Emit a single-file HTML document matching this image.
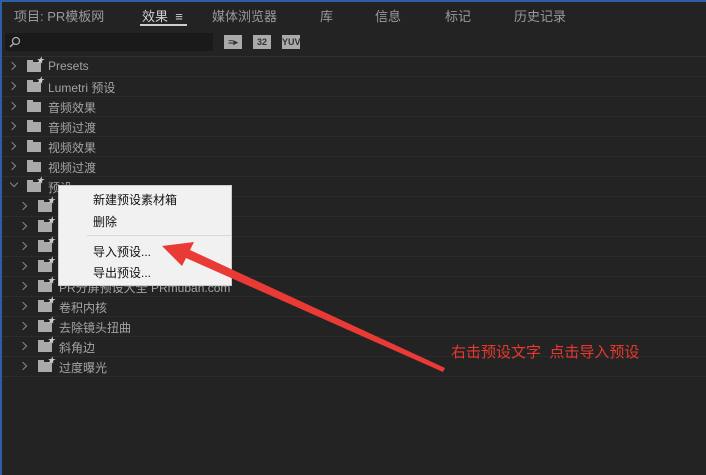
<!DOCTYPE html><html><head><meta charset="utf-8"><style>
*{margin:0;padding:0;box-sizing:border-box}
body{width:706px;height:475px;background:#232323;position:relative;overflow:hidden;font-family:"Liberation Sans","Noto Sans CJK SC",sans-serif;color:#a9a9a9;font-size:12px}
.top{position:absolute;left:0;top:0;width:706px;height:2px;background:#2d5ea8}
.left{position:absolute;left:0;top:0;width:2px;height:475px;background:#2d5ea8}
.tab{position:absolute;top:6px;font-size:13px;color:#9a9a9a}
.row{position:absolute;left:2px;width:704px;height:20px;border-bottom:1px solid #2c2c2c}
.row span{position:absolute;top:2px;font-size:12px;color:#a4a4a4}
.chev{position:absolute;top:6px;width:6px;height:6px;border-right:1px solid #888;border-bottom:1px solid #888;transform:rotate(-45deg)}
.fold{position:absolute;top:5px;width:14px;height:10px;background:#aaa}
.fold:before{content:"";position:absolute;left:0;top:-2px;width:6px;height:2px;background:#aaa}
.star:after{content:"★";position:absolute;right:-3px;top:-7px;font-size:8px;color:#ccc}
.menu{position:absolute;left:58px;top:185px;width:174px;height:101px;background:#f1f1f1;border:1px solid #ccc}
.menu div{position:absolute;left:34px;font-size:12px;color:#111}
.ic{position:absolute;top:35px;height:14px;background:#aaa;color:#333;font-size:9px;font-weight:bold;text-align:center;line-height:14px}
</style></head><body>
<div class="top"></div><div class="left"></div>
<div class="tab" style="left:14px">项目: PR模板网</div>
<div class="tab" style="left:142px;color:#d0d0d0">效果 &nbsp;≡</div>
<div style="position:absolute;left:140px;top:24px;width:47px;height:2px;background:#ccc"></div>
<div class="tab" style="left:212px">媒体浏览器</div>
<div class="tab" style="left:320px">库</div>
<div class="tab" style="left:375px">信息</div>
<div class="tab" style="left:445px">标记</div>
<div class="tab" style="left:514px">历史记录</div>
<div style="position:absolute;left:5px;top:33px;width:208px;height:18px;background:#1a1a1a;border-radius:2px"></div>
<svg style="position:absolute;left:9px;top:36px" width="12" height="12"><circle cx="7" cy="5" r="3.5" fill="none" stroke="#aaa" stroke-width="1.3"/><line x1="4.5" y1="7.5" x2="1" y2="11" stroke="#aaa" stroke-width="1.5"/></svg>
<div class="ic" style="left:224px;width:18px">≡▸</div>
<div class="ic" style="left:253px;width:18px">32</div>
<div class="ic" style="left:282px;width:18px">YUV</div>
<div style="position:absolute;left:2px;top:56px;width:704px;height:1px;background:#2e2e2e"></div>

<div class="row" style="top:57px"><i class="chev" style="left:7px"></i><i class="fold star" style="left:25px"></i><span style="left:46px">Presets</span></div>
<div class="row" style="top:77px"><i class="chev" style="left:7px"></i><i class="fold star" style="left:25px"></i><span style="left:46px">Lumetri 预设</span></div>
<div class="row" style="top:97px"><i class="chev" style="left:7px"></i><i class="fold" style="left:25px"></i><span style="left:46px">音频效果</span></div>
<div class="row" style="top:117px"><i class="chev" style="left:7px"></i><i class="fold" style="left:25px"></i><span style="left:46px">音频过渡</span></div>
<div class="row" style="top:137px"><i class="chev" style="left:7px"></i><i class="fold" style="left:25px"></i><span style="left:46px">视频效果</span></div>
<div class="row" style="top:157px"><i class="chev" style="left:7px"></i><i class="fold" style="left:25px"></i><span style="left:46px">视频过渡</span></div>
<div class="row" style="top:177px"><i class="chev" style="left:9px;top:3px;transform:rotate(45deg)"></i><i class="fold star" style="left:25px"></i><span style="left:46px">预设</span></div>
<div class="row" style="top:197px"><i class="chev" style="left:18px"></i><i class="fold star" style="left:36px"></i></div>
<div class="row" style="top:217px"><i class="chev" style="left:18px"></i><i class="fold star" style="left:36px"></i></div>
<div class="row" style="top:237px"><i class="chev" style="left:18px"></i><i class="fold star" style="left:36px"></i></div>
<div class="row" style="top:257px"><i class="chev" style="left:18px"></i><i class="fold star" style="left:36px"></i></div>
<div class="row" style="top:277px"><i class="chev" style="left:18px"></i><i class="fold star" style="left:36px"></i><span style="left:57px">PR分屏预设大全 PRmuban.com</span></div>
<div class="row" style="top:297px"><i class="chev" style="left:18px"></i><i class="fold star" style="left:36px"></i><span style="left:57px">卷积内核</span></div>
<div class="row" style="top:317px"><i class="chev" style="left:18px"></i><i class="fold star" style="left:36px"></i><span style="left:57px">去除镜头扭曲</span></div>
<div class="row" style="top:337px"><i class="chev" style="left:18px"></i><i class="fold star" style="left:36px"></i><span style="left:57px">斜角边</span></div>
<div class="row" style="top:357px"><i class="chev" style="left:18px"></i><i class="fold star" style="left:36px"></i><span style="left:57px">过度曝光</span></div>

<div class="menu">
<div style="top:5px">新建预设素材箱</div>
<div style="top:27px">删除</div>
<div style="top:49px;left:28px;width:144px;height:1px;background:#d8d8d8"></div>
<div style="top:57px">导入预设...</div>
<div style="top:78px">导出预设...</div>
</div>
<svg style="position:absolute;left:0;top:0" width="706" height="475"><polygon points="443,372 445,368 190,250 194,242 162,246 182,266 186,258" fill="#ea3a35"/></svg>
<div style="position:absolute;left:451px;top:341px;font-size:15px;color:#e8382f">右击预设文字 &nbsp;点击导入预设</div>
</body></html>
